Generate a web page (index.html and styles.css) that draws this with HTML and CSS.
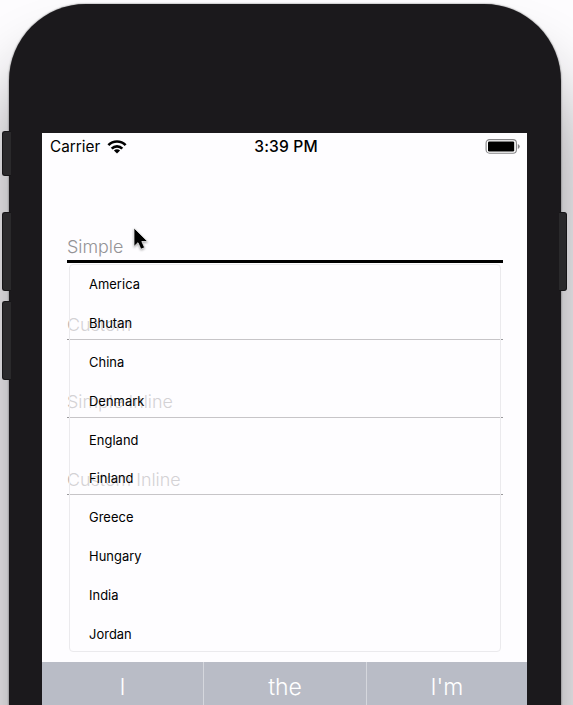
FILE: index.html
```html
<!DOCTYPE html>
<html lang="en">
<head>
<meta charset="utf-8">
<title>Dropdown</title>
<link rel="stylesheet" href="styles.css">
</head>
<body>
<div class="stage">
  <div class="phone">
    <i class="key key-mute"></i>
    <i class="key key-up"></i>
    <i class="key key-down"></i>
    <i class="key key-power"></i>
    <main class="screen">
      <header class="status">
        <div class="carrier"><span>Carrier</span>
          <svg class="wifi" width="20" height="14" viewBox="0 0 20 14"><g fill="none" stroke="#000" stroke-width="2.7"><path d="M1.4 5.1C6.2.3 13.8.3 18.6 5.1"/><path d="M4.7 8.6C7.7 5.6 12.3 5.6 15.3 8.6"/></g><path d="M10 13.6 6.9 10.5Q10 7.8 13.1 10.5Z"/></svg>
        </div>
        <div class="time">3:39 PM</div>
        <svg class="battery" width="35" height="15" viewBox="0 0 35 15"><rect x="1.1" y=".6" width="30.3" height="13.6" rx="3.4" fill="#fff" stroke="#858487" stroke-width="1.1"/><rect x="3" y="2.4" width="26.2" height="10.1" rx="1.2"/><path d="M32.8 4.9Q34.7 5.5 34.7 7.4T32.8 9.9Z" fill="#858487"/></svg>
      </header>
      <form class="form">
        <div class="field active"><label>Simple</label></div>
        <div class="field"><label>Custom</label></div>
        <div class="field"><label>Simple Inline</label></div>
        <div class="field"><label>Custom Inline</label></div>
        <ul class="menu">
          <li>America</li><li>Bhutan</li><li>China</li><li>Denmark</li><li>England</li>
          <li>Finland</li><li>Greece</li><li>Hungary</li><li>India</li><li>Jordan</li>
        </ul>
      </form>
      <div class="suggestions"><span>I</span><span>the</span><span>I'm</span></div>
    </main>
  </div>
  <svg class="cursor" width="18" height="27" viewBox="0 0 18 27"><path d="M2 2V20.4L6 16.7 8.9 23.2 12.6 21.6 9.8 15.5H15.6Z" stroke="#fff" stroke-width=".7"/></svg>
</div>
</body>
</html>
```
FILE: styles.css
```css
* { box-sizing: border-box; }
body { margin: 0; background: #fdfcfe; font-family: Inter, "Liberation Sans", sans-serif; color: #000; }
.stage { position: relative; height: 705px; overflow: hidden; padding: 4px 12px 0 9px; }
.phone {
  position: relative; height: 1100px; padding: 129px 34px 0 33px;
  background: #1b191c; border-radius: 77px;
  box-shadow: 0 0 2px rgba(0,0,0,.6), 0 62px 68px 0 rgba(20,18,24,.48);
}
.key { position: absolute; width: 9px; height: 79px; left: -7px; background: #2a292b; border: 1px solid #161517; border-radius: 3px 0 0 3px; border-right: 0; }
.key-mute { top: 127px; height: 45px; }
.key-up { top: 208px; }
.key-down { top: 297px; }
.key-power { top: 208px; left: auto; right: -6px; width: 8px; border-radius: 0 3px 3px 0; border: 1px solid #161517; border-left: 0; }
.screen { height: 572px; background: #fefdff; display: flex; flex-direction: column; }
.status { height: 27px; padding: 0 7px 0 8px; display: grid; grid-template-columns: 1fr auto 1fr; align-items: center; line-height: 27px; font-size: 15.6px; }
.carrier { display: flex; align-items: center; gap: 7px; }
.carrier span { font-size: 15.3px; }
.time { font-weight: 500; letter-spacing: .15px; position: relative; left: 1px; }
.battery { justify-self: end; }
.form { position: relative; flex: 1; margin: 0; padding: 24px 24px 0 25px; }
.field { height: 77.7px; padding-top: 50px; border-bottom: 1px solid #99989b; color: #b0afb2; font-size: 17.9px; font-weight: 300; line-height: 24px; }
.field label { display: block; white-space: nowrap; }
.field.active { height: 79px; padding-top: 51px; border-bottom: 3px solid #000; color: #949396; }
.field.active + .field { height: 77px; }
.menu { position: absolute; left: 27px; top: 104px; width: 432px; height: 388px; margin: 0; padding: .4px 19px 0; list-style: none; background: rgba(254,253,255,.45); border: 1px solid #ebeaed; border-radius: 4px; }
.menu li { height: 38.8px; line-height: 39px; font-size: 12.9px; letter-spacing: .05px; }
.suggestions { height: 43px; display: grid; grid-template-columns: 161px 163px 1fr; background: #b9bcc6; color: #fff; text-align: center; font-size: 23px; line-height: 50px; font-weight: 350; }
.suggestions span + span { border-left: 1px solid #d5d7dd; }
.cursor { position: absolute; left: 132px; top: 226px; filter: drop-shadow(0 1px 1px rgba(0,0,0,.35)); }
```
